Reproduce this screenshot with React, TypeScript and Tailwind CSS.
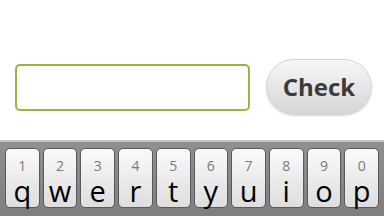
import React from 'react';

const keys = [
  ['1', 'q'],
  ['2', 'w'],
  ['3', 'e'],
  ['4', 'r'],
  ['5', 't'],
  ['6', 'y'],
  ['7', 'u'],
  ['8', 'i'],
  ['9', 'o'],
  ['0', 'p'],
];

export default function App() {
  return (
    <div className="w-[384px] h-[216px] bg-white flex flex-col overflow-hidden font-['Open_Sans','DejaVu_Sans',sans-serif]">
      {/* input row */}
      <div className="h-[140px] flex items-center pl-[15px] pr-[12px] gap-[16px] pt-[34px]">
        <div className="w-[235px] h-[47px] rounded-[5px] border-2 border-[#95b83c] bg-white" />
        <button className="w-[106px] h-[56px] rounded-full border border-[#d4d4d4] bg-gradient-to-b from-[#f7f7f7] to-[#d6d6d6] shadow-[0_1px_2px_rgba(0,0,0,0.15)] text-[24px] font-bold text-[#3b3b3b] leading-none">
          Check
        </button>
      </div>

      {/* keyboard */}
      <div className="flex-1 border-t-2 border-[#c4c4c4] bg-gradient-to-b from-[#909090] to-[#7e7e7e] flex gap-[3px] px-[5px] pt-[6px] pb-[8px]">
        {keys.map(([n, l]) => (
          <div
            key={l}
            className="flex-1 rounded-[5px] border border-[#5a5a5a] bg-gradient-to-b from-[#fafafa] to-[#dedede] flex flex-col items-center"
          >
            <span className="mt-[10px] text-[14px] leading-[14px] text-[#7a7a7a]">{n}</span>
            <span className="mt-[3px] text-[29px] leading-[29px] text-black">{l}</span>
          </div>
        ))}
      </div>
    </div>
  );
}
